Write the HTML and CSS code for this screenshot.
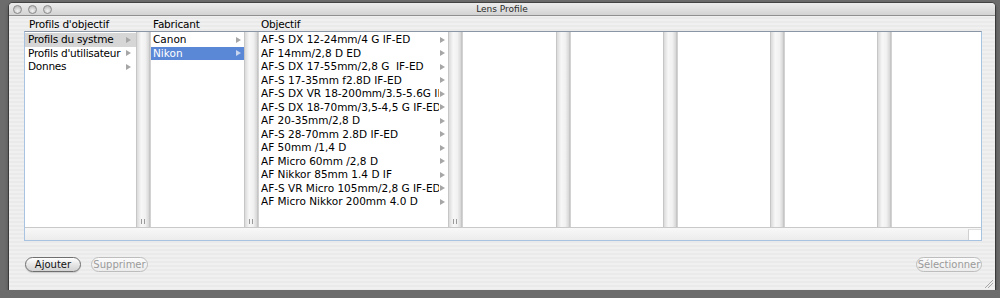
FILE: index.html
```html
<!DOCTYPE html>
<html lang="fr">
<head>
    <meta charset="UTF-8">
    <title>Lens Profile</title>
    <link rel="stylesheet" href="styles.css">
</head>
<body>
<div class="window">
    <div class="titlebar">
        <div class="lights">
            <span class="light"></span>
            <span class="light"></span>
            <span class="light"></span>
        </div>
        <div class="title">Lens Profile</div>
    </div>

    <div class="content">
        <div class="headers">
            <div class="head head-1">Profils d'objectif</div>
            <div class="head head-2">Fabricant</div>
            <div class="head head-3">Objectif</div>
        </div>

        <div class="browser">
            <div class="columns">
                <!-- colonne 1 -->
                <div class="col">
                    <ul class="list list-1">
                        <li class="row sel-gray"><span class="name">Profils du systme</span><i class="arrow"></i></li>
                        <li class="row"><span class="name">Profils d'utilisateur</span><i class="arrow"></i></li>
                        <li class="row"><span class="name">Donnes</span><i class="arrow"></i></li>
                    </ul>
                    <div class="scroller"><i class="grip"></i></div>
                </div>
                <!-- colonne 2 -->
                <div class="col">
                    <ul class="list list-2">
                        <li class="row"><span class="name">Canon</span><i class="arrow"></i></li>
                        <li class="row sel-blue"><span class="name">Nikon</span><i class="arrow"></i></li>
                    </ul>
                    <div class="scroller"><i class="grip"></i></div>
                </div>
                <!-- colonne 3 -->
                <div class="col">
                    <ul class="list list-3">
                        <li class="row"><span class="name">AF-S DX 12-24mm/4 G IF-ED</span><i class="arrow"></i></li>
                        <li class="row"><span class="name">AF 14mm/2,8 D ED</span><i class="arrow"></i></li>
                        <li class="row"><span class="name">AF-S DX 17-55mm/2,8 G&nbsp; IF-ED</span><i class="arrow"></i></li>
                        <li class="row"><span class="name">AF-S 17-35mm f2.8D IF-ED</span><i class="arrow"></i></li>
                        <li class="row"><span class="name">AF-S DX VR 18-200mm/3.5-5.6G IF-ED</span><i class="arrow"></i></li>
                        <li class="row"><span class="name">AF-S DX 18-70mm/3,5-4,5 G IF-ED</span><i class="arrow"></i></li>
                        <li class="row"><span class="name">AF 20-35mm/2,8 D</span><i class="arrow"></i></li>
                        <li class="row"><span class="name">AF-S 28-70mm 2.8D IF-ED</span><i class="arrow"></i></li>
                        <li class="row"><span class="name">AF 50mm /1,4 D</span><i class="arrow"></i></li>
                        <li class="row"><span class="name">AF Micro 60mm /2,8 D</span><i class="arrow"></i></li>
                        <li class="row"><span class="name">AF Nikkor 85mm 1.4 D IF</span><i class="arrow"></i></li>
                        <li class="row"><span class="name">AF-S VR Micro 105mm/2,8 G IF-ED</span><i class="arrow"></i></li>
                        <li class="row"><span class="name">AF Micro Nikkor 200mm 4.0 D</span><i class="arrow"></i></li>
                    </ul>
                    <div class="scroller"><i class="grip"></i></div>
                </div>
                <!-- colonnes vides -->
                <div class="col">
                    <ul class="list list-4"></ul>
                    <div class="scroller"></div>
                </div>
                <div class="col">
                    <ul class="list list-5"></ul>
                    <div class="scroller"></div>
                </div>
                <div class="col">
                    <ul class="list list-5"></ul>
                    <div class="scroller"></div>
                </div>
                <div class="col">
                    <ul class="list list-5"></ul>
                    <div class="scroller"></div>
                </div>
                <div class="col col-last">
                    <ul class="list"></ul>
                </div>
            </div>
            <div class="hscroll">
                <div class="hscroll-corner"></div>
            </div>
        </div>

        <div class="buttons">
            <div class="btn-group">
                <a class="btn btn-add" href="javascript:;">Ajouter</a>
                <a class="btn btn-del disabled" href="javascript:;">Supprimer</a>
            </div>
            <a class="btn btn-select disabled" href="javascript:;">Sélectionner</a>
        </div>
    </div>
    <div class="resize"></div>
</div>
</body>
</html>
```

FILE: styles.css
```css
* {
    margin: 0;
    padding: 0;
    box-sizing: border-box;
}

ul {
    list-style: none;
}

a {
    text-decoration: none;
}

body {
    background: #6c6c6c;
    font-family: "DejaVu Sans", "Liberation Sans", sans-serif;
    font-size: 10.5px;
    color: #000;
    overflow: hidden;
    padding: 3px 0 0 9px;
}

.window {
    position: relative;
    width: 986px;
    height: 287px;
    border-radius: 4px 4px 0 0;
    background: repeating-linear-gradient(#f0f0f0 0, #f0f0f0 2px, #eaeaea 2px, #eaeaea 4px);
    box-shadow: 0 0 0 1px rgba(0, 0, 0, .35), 0 2px 4px rgba(0, 0, 0, .4);
}

/* barre de titre */
.titlebar {
    position: relative;
    height: 13px;
    border-bottom: 1px solid #8f8f8f;
    border-radius: 4px 4px 0 0;
    background: linear-gradient(#ececec, #d3d3d3);
}

.lights {
    display: flex;
    gap: 6px;
    padding: 2px 0 0 4px;
}

.light {
    width: 9px;
    height: 9px;
    border-radius: 50%;
    border: 1px solid #8a8a8a;
    background: radial-gradient(circle at 50% 70%, #f2f2f2, #c4c4c4 70%);
}

.title {
    position: absolute;
    top: 0;
    left: 0;
    right: 0;
    text-align: center;
    font-size: 9px;
    line-height: 12px;
    color: #2a2a2a;
}

/* contenu */
.content {
    padding: 0 13px 0 15px;
}

.headers {
    display: flex;
    height: 15px;
    line-height: 15px;
    padding-top: 1px;
}

.head {
    white-space: nowrap;
    letter-spacing: -0.2px;
}

.head-1 {
    width: 126px;
    padding-left: 5px;
}

.head-2 {
    width: 108px;
    padding-left: 3px;
}

.head-3 {
    padding-left: 3px;
}

/* navigateur en colonnes */
.browser {
    border: 1px solid #a8c3e2;
    border-top-color: #8a96a6;
    background: #fff;
}

.columns {
    display: flex;
    height: 195px;
}

.col {
    display: flex;
    flex: none;
}

.col-last {
    flex: 1;
}

.list {
    height: 100%;
    padding-top: 1px;
    background: #fff;
    border-left: 1px solid #d2d2d2;
    overflow: hidden;
}

.list-1 {
    width: 111px;
    border-left: none;
    letter-spacing: -0.25px;
}

.list-2 {
    width: 94px;
}

.list-3 {
    width: 190px;
}

.list-4 {
    width: 94px;
}

.list-5 {
    width: 93px;
}

.col-last .list {
    width: 100%;
}

.row {
    display: flex;
    align-items: center;
    height: 13.5px;
    line-height: 13.5px;
    padding-left: 2px;
    padding-right: 3px;
    white-space: nowrap;
}

.list-1 .row {
    padding-left: 3px;
    padding-right: 5px;
}

.name {
    flex: 1;
    overflow: hidden;
}

.arrow {
    flex: none;
    width: 0;
    height: 0;
    margin-left: 1px;
    border-left: 5px solid #a6a6a6;
    border-top: 3px solid transparent;
    border-bottom: 3px solid transparent;
}

.sel-gray {
    background: #d6d6d6;
}

.sel-blue {
    background: #5b88d6;
    color: #fff;
}

.sel-blue .arrow {
    border-left-color: #c9d6ef;
}

.scroller {
    position: relative;
    width: 14px;
    height: 100%;
    border-left: 1px solid #c6c6c6;
    border-right: 1px solid #c6c6c6;
    background: linear-gradient(to right, #dadada, #f7f7f7 35%, #f1f1f1 70%, #d6d6d6);
}

.grip {
    position: absolute;
    left: 4px;
    bottom: 3px;
    width: 4px;
    height: 5px;
    border-left: 1px solid #9a9a9a;
    border-right: 1px solid #9a9a9a;
}

.hscroll {
    display: flex;
    justify-content: flex-end;
    height: 13px;
    border-top: 1px solid #c9c9c9;
    background: linear-gradient(#f8f8f8, #ececec);
}

.hscroll-corner {
    width: 13px;
    height: 11px;
    margin-top: 1px;
    background: #fff;
    border-left: 1px solid #d0d0d0;
    border-top: 1px solid #e0e0e0;
}

/* boutons */
.buttons {
    display: flex;
    justify-content: space-between;
    padding: 16px 0 0 1px;
}

.btn-group {
    display: flex;
    gap: 10px;
}

.btn {
    display: block;
    height: 15px;
    line-height: 13px;
    border: 1px solid #6f6f6f;
    border-radius: 8px;
    text-align: center;
    font-size: 10px;
    color: #111;
    background: linear-gradient(#ffffff, #e4e4e4 55%, #d2d2d2);
    box-shadow: 0 1px 1px rgba(0, 0, 0, .15);
}

.btn-add {
    width: 56px;
}

.btn-del {
    width: 57px;
}

.btn-select {
    width: 66px;
}

.btn.disabled {
    color: #9b9b9b;
    border-color: #bdbdbd;
    background: linear-gradient(#fbfbfb, #ececec);
    box-shadow: none;
}

.resize {
    position: absolute;
    right: 2px;
    bottom: 2px;
    width: 8px;
    height: 8px;
    background: linear-gradient(135deg, transparent 45%, #a8a8a8 45%, #a8a8a8 52%, transparent 52%, transparent 68%, #a8a8a8 68%, #a8a8a8 75%, transparent 75%);
}
```
